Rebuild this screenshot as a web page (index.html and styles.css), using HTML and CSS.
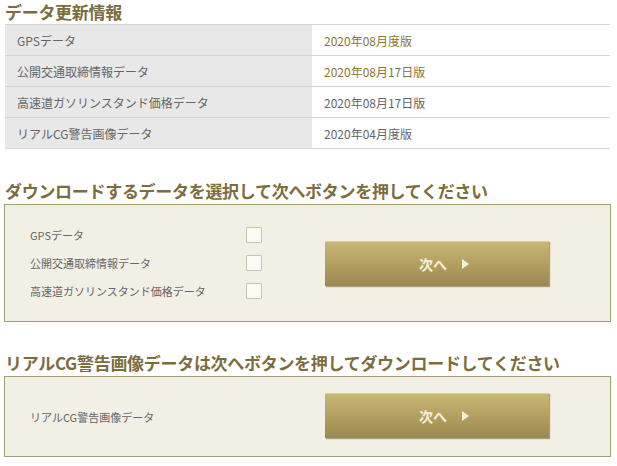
FILE: index.html
```html
<!DOCTYPE html>
<html lang="ja">
<head>
<meta charset="utf-8">
<link rel="stylesheet" href="styles.css">
</head>
<body>
<div class="page">
  <h2 class="heading heading-first">データ更新情報</h2>
  <table class="info">
    <tr><th>GPSデータ</th><td class="gold">2020年08月度版</td></tr>
    <tr><th>公開交通取締情報データ</th><td class="gold">2020年08月17日版</td></tr>
    <tr><th>高速道ガソリンスタンド価格データ</th><td>2020年08月17日版</td></tr>
    <tr><th>リアルCG警告画像データ</th><td>2020年04月度版</td></tr>
  </table>

  <h2 class="heading heading-second">ダウンロードするデータを選択して次へボタンを押してください</h2>
  <div class="box box-select">
    <ul class="choices">
      <li><span class="label">GPSデータ</span><span class="check"></span></li>
      <li><span class="label">公開交通取締情報データ</span><span class="check"></span></li>
      <li><span class="label">高速道ガソリンスタンド価格データ</span><span class="check"></span></li>
    </ul>
    <button class="next">次へ<span class="arrow"></span></button>
  </div>

  <h2 class="heading heading-third">リアルCG警告画像データは次へボタンを押してダウンロードしてください</h2>
  <div class="box box-cg">
    <div class="cg-label">リアルCG警告画像データ</div>
    <button class="next">次へ<span class="arrow"></span></button>
  </div>
</div>
</body>
</html>
```
FILE: styles.css
```css
html, body {
  margin: 0;
  padding: 0;
  background: #ffffff;
}
body {
  font-family: "Noto Sans CJK JP", "Noto Sans", sans-serif;
  color: #555;
}
.page {
  width: 608px;
  padding-left: 4px;
}
.heading {
  margin: 0;
  font-size: 17px;
  line-height: 22px;
  font-weight: bold;
  color: #7b6d3e;
  padding-left: 1px;
  letter-spacing: -0.3px;
}
.heading-first {
  padding-top: 1px;
  height: 23px;
}
.heading-second {
  margin-top: 31px;
  height: 24px;
}
.heading-third {
  margin-top: 30px;
  height: 24px;
}
.info {
  border-collapse: collapse;
  width: 605px;
  margin-left: 1px;
  font-size: 12px;
}
.info th, .info td {
  height: 30px;
  padding: 0 0 0 12px;
  border-top: 1px solid #d2d2d2;
  border-bottom: 1px solid #d2d2d2;
  text-align: left;
  font-weight: normal;
  vertical-align: middle;
  color: #666;
}
.info th {
  width: 295px;
  background: #e8e8e8;
}
.info td {
  background: #fff;
}
.info td.gold {
  color: #8d7633;
}
.box {
  border: 1px solid #a39d72;
  background: #f2efe5;
  display: flex;
  align-items: center;
  box-sizing: border-box;
}
.box-select {
  height: 118px;
  width: 607px;
}
.box-cg {
  height: 81px;
  width: 607px;
}
.choices {
  list-style: none;
  margin: 0;
  padding: 0 0 0 25px;
  width: 295px;
  box-sizing: border-box;
}
.choices li {
  display: flex;
  align-items: center;
  height: 28px;
  font-size: 11px;
  color: #666;
}
.choices .label {
  width: 216px;
}
.check {
  width: 14px;
  height: 14px;
  border: 1px solid #c9c4b0;
  background: #fbfaf5;
  border-radius: 1px;
}
.cg-label {
  width: 295px;
  padding-left: 25px;
  box-sizing: border-box;
  font-size: 11px;
  color: #666;
}
.next {
  width: 224px;
  height: 45px;
  margin-left: 25px;
  border: none;
  border-top: 1px solid #ddd19a;
  background: linear-gradient(#c8b776 0%, #b5a262 45%, #9c8952 100%);
  box-shadow: 1px 1px 1px rgba(80, 65, 30, 0.45);
  color: #f6f1dd;
  font-family: "Noto Sans CJK JP", "Noto Sans", sans-serif;
  font-size: 14px;
  font-weight: bold;
  display: flex;
  align-items: center;
  justify-content: center;
  padding: 0 0 0 14px;
}
.box-cg .next {
  margin-top: -3px;
}
.arrow {
  width: 0;
  height: 0;
  margin-left: 15px;
  border-top: 5px solid transparent;
  border-bottom: 5px solid transparent;
  border-left: 7px solid #f6f1dd;
}
```
